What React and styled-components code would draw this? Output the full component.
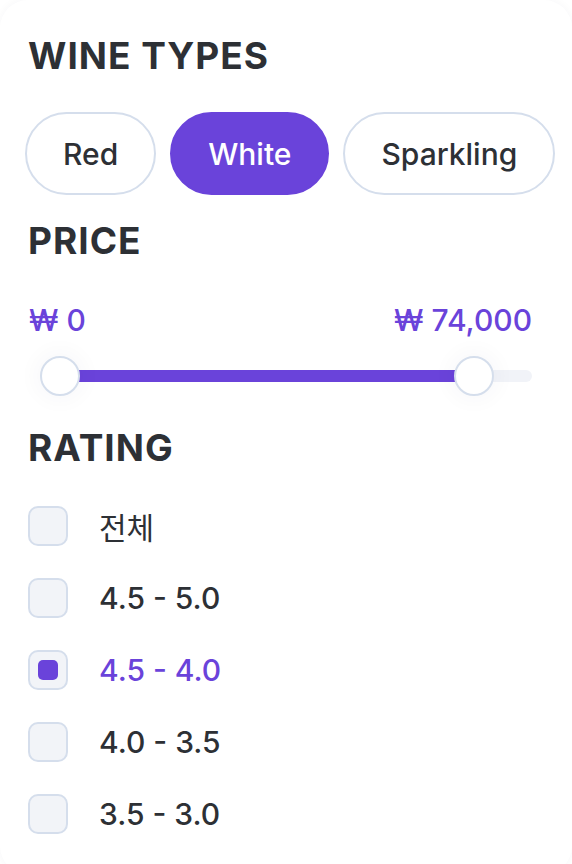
import React, { useState } from 'react';
import styled, { createGlobalStyle } from 'styled-components';

const PURPLE = '#6a43da';
const DARK = '#2d3035';
const LINE = '#d5deec';
const RANGE_MAX = 80800;

const GlobalStyle = createGlobalStyle`
  body {
    margin: 0;
    background: #fff;
    font-family: Inter, "Noto Sans CJK KR", "Noto Sans", sans-serif;
    color: ${DARK};
  }
`;

const Panel = styled.aside`
  width: 572px;
  box-sizing: border-box;
  padding: 38px 22px 40px 28px;
  border-radius: 28px;
  box-shadow: 0 0 10px rgba(30, 40, 80, 0.04);
`;

const Heading = styled.h2`
  margin: 0;
  font-size: 37px;
  line-height: 36px;
  font-weight: 700;
  letter-spacing: 1px;
  color: ${DARK};
`;

const Section = styled.section`
  margin-top: ${({ $gap }) => $gap}px;
`;

const PillRow = styled.div`
  display: flex;
  gap: 14px;
  margin: 38px 0 0 -3px;
`;

const Pill = styled.button`
  height: 83px;
  padding: 0 36px;
  border-radius: 999px;
  border: 2px solid ${({ $active }) => ($active ? PURPLE : LINE)};
  background: ${({ $active }) => ($active ? PURPLE : '#fff')};
  color: ${({ $active }) => ($active ? '#fff' : DARK)};
  font-family: inherit;
  font-size: 30px;
  font-weight: 500;
  cursor: pointer;
`;

const PriceLabels = styled.div`
  display: flex;
  justify-content: space-between;
  margin-top: 46px;
  padding: 0 0 0 1px;
  width: 503px;
  font-size: 30px;
  line-height: 30px;
  font-weight: 500;
  color: ${PURPLE};
`;

const SliderBox = styled.div`
  position: relative;
  height: 40px;
  margin: 21px 0 0 12px;
  width: 492px;
  display: flex;
  align-items: center;
`;

const Track = styled.div`
  width: 100%;
  height: 12px;
  border-radius: 6px;
  background: #f1f3f8;
`;

const Fill = styled.div`
  position: absolute;
  top: 14px;
  height: 12px;
  background: ${PURPLE};
`;

const Thumb = styled.div`
  position: absolute;
  top: 0;
  width: 40px;
  height: 40px;
  box-sizing: border-box;
  border-radius: 50%;
  background: #fff;
  border: 2px solid ${LINE};
  box-shadow: 0 0 18px 8px rgba(30, 40, 80, 0.025);
`;

const RatingList = styled.ul`
  list-style: none;
  margin: 40px 0 0;
  padding: 0;
  display: flex;
  flex-direction: column;
  gap: 32px;
`;

const RatingRow = styled.li`
  display: flex;
  align-items: center;
  gap: 31px;
  height: 40px;
  cursor: pointer;
`;

const Box = styled.span`
  width: 40px;
  height: 40px;
  box-sizing: border-box;
  border-radius: 10px;
  border: 2px solid ${LINE};
  background: #f2f4f8;
  display: flex;
  align-items: center;
  justify-content: center;
`;

const Mark = styled.span`
  width: 20px;
  height: 20px;
  border-radius: 5px;
  background: ${PURPLE};
`;

const RatingLabel = styled.span`
  font-size: 30px;
  font-weight: 500;
  color: ${({ $active }) => ($active ? PURPLE : DARK)};
  &:lang(ko) {
    font-weight: 400;
  }
`;

const wineTypes = ['Red', 'White', 'Sparkling'];
const ratings = ['전체', '4.5 - 5.0', '4.5 - 4.0', '4.0 - 3.5', '3.5 - 3.0'];

const won = (n) => `₩ ${n.toLocaleString('en-US')}`;

export default function App() {
  const [type, setType] = useState('White');
  const [rating, setRating] = useState('4.5 - 4.0');
  const [price] = useState([0, 74000]);

  const usable = 492 - 40;
  const lo = (price[0] / RANGE_MAX) * usable;
  const hi = (price[1] / RANGE_MAX) * usable;

  return (
    <>
      <GlobalStyle />
      <Panel>
        <Heading>WINE TYPES</Heading>
        <PillRow>
          {wineTypes.map((t) => (
            <Pill key={t} $active={t === type} onClick={() => setType(t)}>
              {t}
            </Pill>
          ))}
        </PillRow>

        <Section $gap={28}>
          <Heading>PRICE</Heading>
          <PriceLabels>
            <span>{won(price[0])}</span>
            <span>{won(price[1])}</span>
          </PriceLabels>
          <SliderBox>
            <Track />
            <Fill style={{ left: lo + 20, width: hi - lo }} />
            <Thumb style={{ left: lo }} />
            <Thumb style={{ left: hi }} />
          </SliderBox>
        </Section>

        <Section $gap={34}>
          <Heading>RATING</Heading>
          <RatingList>
            {ratings.map((r) => (
              <RatingRow key={r} onClick={() => setRating(r)}>
                <Box>{r === rating && <Mark />}</Box>
                <RatingLabel
                  lang={/[가-힣]/.test(r) ? 'ko' : undefined}
                  $active={r === rating}
                >
                  {r}
                </RatingLabel>
              </RatingRow>
            ))}
          </RatingList>
        </Section>
      </Panel>
    </>
  );
}
